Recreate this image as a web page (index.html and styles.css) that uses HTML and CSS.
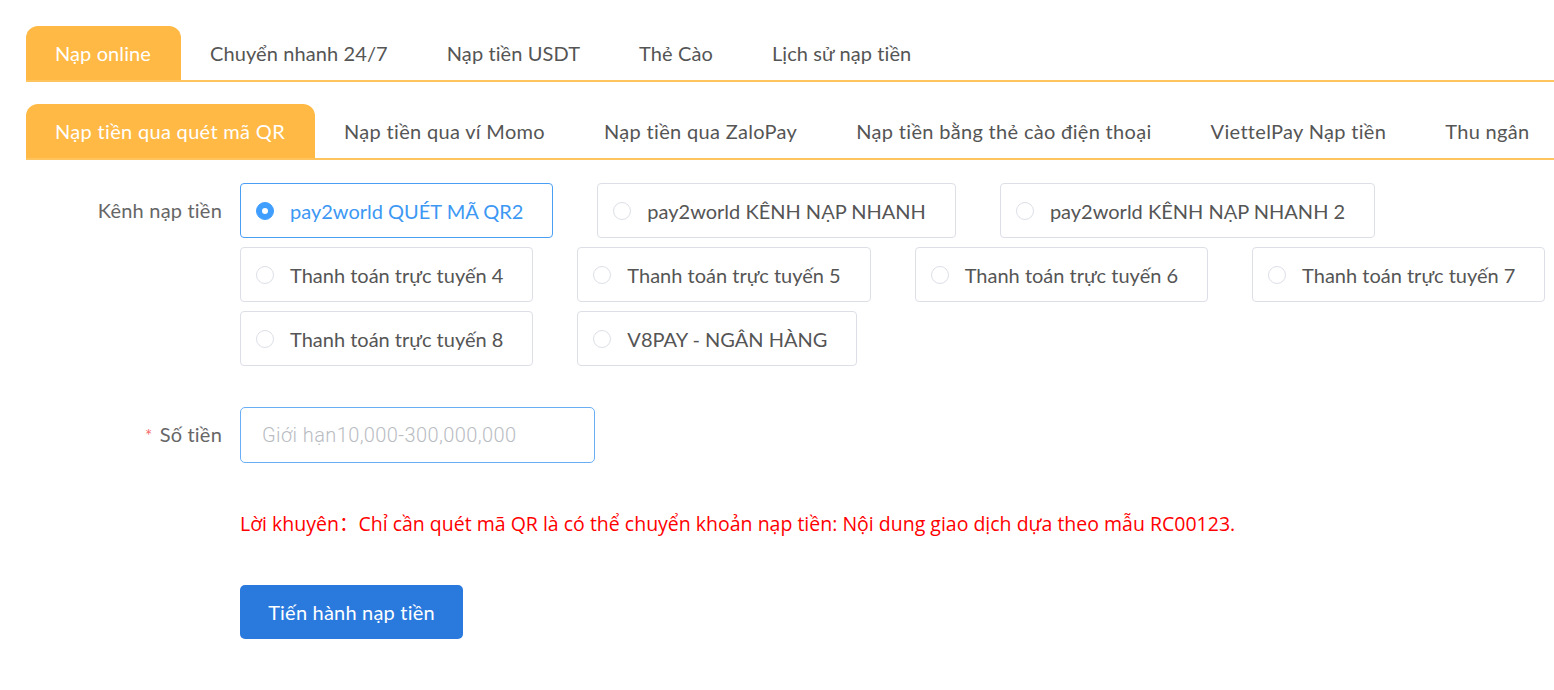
FILE: index.html
```html
<!DOCTYPE html>
<html lang="vi">
<head>
<meta charset="utf-8">
<title>Nạp tiền</title>
<link rel="stylesheet" href="styles.css">
</head>
<body>
<div class="page">
  <nav class="tabs">
    <div class="tab active">Nạp online</div>
    <div class="tab">Chuyển nhanh 24/7</div>
    <div class="tab">Nạp tiền USDT</div>
    <div class="tab">Thẻ Cào</div>
    <div class="tab">Lịch sử nạp tiền</div>
  </nav>
  <nav class="tabs sub">
    <div class="tab active">Nạp tiền qua quét mã QR</div>
    <div class="tab">Nạp tiền qua ví Momo</div>
    <div class="tab">Nạp tiền qua ZaloPay</div>
    <div class="tab">Nạp tiền bằng thẻ cào điện thoại</div>
    <div class="tab">ViettelPay Nạp tiền</div>
    <div class="tab">Thu ngân</div>
  </nav>

  <form class="form">
    <div class="label">Kênh nạp tiền</div>
    <div class="options">
      <label class="opt checked"><span class="dot"></span><span>pay2world QUÉT MÃ QR2</span></label>
      <label class="opt"><span class="dot"></span><span>pay2world KÊNH NẠP NHANH</span></label>
      <label class="opt"><span class="dot"></span><span>pay2world KÊNH NẠP NHANH 2</span></label>
      <label class="opt"><span class="dot"></span><span>Thanh toán trực tuyến 4</span></label>
      <label class="opt"><span class="dot"></span><span>Thanh toán trực tuyến 5</span></label>
      <label class="opt"><span class="dot"></span><span>Thanh toán trực tuyến 6</span></label>
      <label class="opt"><span class="dot"></span><span>Thanh toán trực tuyến 7</span></label>
      <label class="opt"><span class="dot"></span><span>Thanh toán trực tuyến 8</span></label>
      <label class="opt"><span class="dot"></span><span>V8PAY - NGÂN HÀNG</span></label>
    </div>

    <div class="label amount-label"><span class="req">*</span> Số tiền</div>
    <div class="amount-field">
      <input class="amount" type="text" placeholder="Giới hạn10,000-300,000,000">
    </div>

    <div class="spacer"></div>
    <p class="note">Lời khuyên<span class="colon">：</span>Chỉ cần quét mã QR là có thể chuyển khoản nạp tiền: Nội dung giao dịch dựa theo mẫu RC00123.</p>

    <div class="spacer"></div>
    <div><button type="button" class="submit">Tiến hành nạp tiền</button></div>
  </form>
</div>
</body>
</html>
```

FILE: styles.css
```css
* { box-sizing: border-box; }
html, body { margin: 0; background: #fff; }
body {
  font-family: Lato, "Noto Sans", sans-serif;
  color: #555;
}
.page {
  padding: 26px 0 0 26px;
}
.tabs {
  display: flex;
  height: 56px;
  border-bottom: 2px solid #ffc45e;
}
.tabs.sub {
  margin-top: 22px;
}
.tab {
  display: flex;
  align-items: center;
  padding: 0 30px 0 29px;
  font-size: 20px;
  letter-spacing: 0.1px;
  color: #555;
  white-space: nowrap;
}
.tabs.sub .tab {
  letter-spacing: 0.32px;
}
.tab.active {
  background: #ffb944;
  color: #fff;
  border-radius: 12px 12px 0 0;
}
.form {
  display: grid;
  grid-template-columns: 214px 1fr;
  margin-top: 23px;
}
.label {
  text-align: right;
  padding-right: 18px;
  font-size: 20px;
  letter-spacing: 0.2px;
  color: #666;
  line-height: 55px;
}
.req { color: #f56c6c; font-size: 17px; margin-right: 2px; }
.options {
  display: flex;
  flex-wrap: wrap;
  gap: 9px 44px;
}
.opt {
  display: flex;
  align-items: center;
  gap: 16px;
  height: 55px;
  padding: 0 29px 0 15px;
  border: 1px solid #dcdfe6;
  border-radius: 4px;
  font-size: 20px;
  color: #555;
  white-space: nowrap;
}
.dot {
  width: 18px;
  height: 18px;
  border: 1px solid #dcdfe6;
  border-radius: 50%;
  flex: none;
}
.opt.checked {
  border-color: #4a9ff5;
  color: #3d98f4;
}
.opt.checked .dot {
  background: #409eff;
  border-color: #409eff;
  position: relative;
}
.opt.checked .dot::after {
  content: "";
  position: absolute;
  left: 50%;
  top: 50%;
  width: 6px;
  height: 6px;
  margin: -3px 0 0 -3px;
  background: #fff;
  border-radius: 50%;
}
.amount-label { margin-top: 41px; }
.amount-field { margin-top: 41px; }
.amount {
  width: 355px;
  height: 56px;
  border: 1px solid #69aef5;
  border-radius: 5px;
  padding: 0 21px;
  font-family: Roboto, "Noto Sans", sans-serif;
  font-weight: 300;
  font-size: 20px;
  letter-spacing: 0.4px;
  color: #555;
  outline: none;
}
.amount::placeholder { color: #b9bcc2; }
.note {
  margin: 48px 0 0;
  font-family: "Open Sans", "Noto Sans", sans-serif;
  font-size: 19.5px;
  color: #f00;
  line-height: 24px;
}
.colon {
  font-family: "Noto Sans CJK SC", sans-serif;
}
.submit {
  margin-top: 49px;
  width: 223px;
  height: 54px;
  border: none;
  border-radius: 5px;
  background: #2a79dd;
  color: #fff;
  font-family: Lato, "Noto Sans", sans-serif;
  font-size: 20px;
  letter-spacing: 0.2px;
}
```
